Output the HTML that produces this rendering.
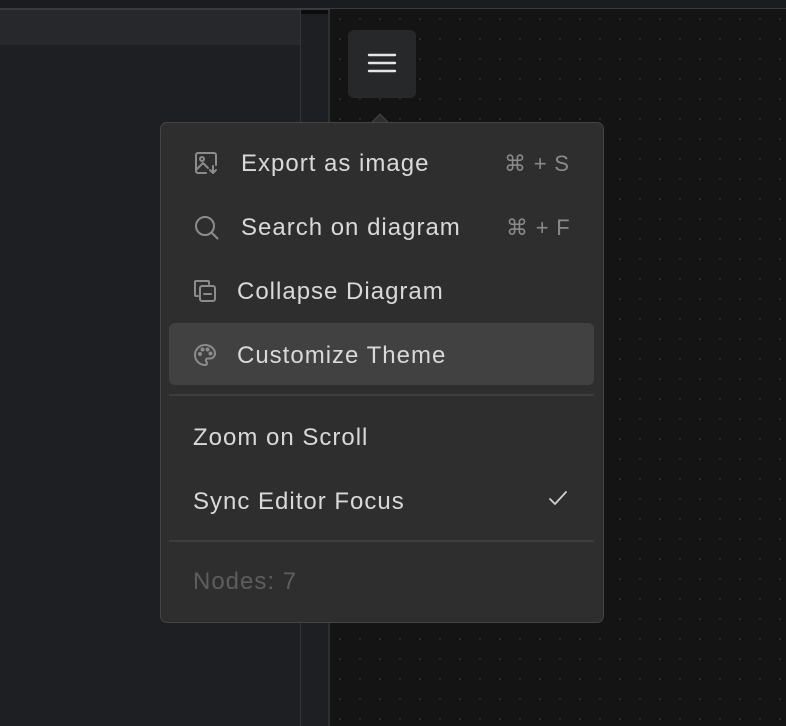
<!DOCTYPE html>
<html><head><meta charset="utf-8"><style>
*{margin:0;padding:0;box-sizing:border-box}
body{width:786px;height:726px;overflow:hidden;background:#141414;position:relative;font-family:"Liberation Sans",sans-serif}
.abs{position:absolute}
.canvas{left:330px;top:9px;right:0;bottom:0;background-color:#141414;background-image:radial-gradient(circle,#2a2a2a 1px,transparent 1.3px);background-size:20px 20px;background-position:0 0}
.menu{left:160px;top:122px;width:444px;height:501px;background:#2e2e2e;border:1px solid #444;border-radius:7px}
.t{position:absolute;color:#d9d9d9;font-size:24px;letter-spacing:1px;line-height:30px}
.k{position:absolute;color:#8a8a8a;font-size:22px;line-height:30px;letter-spacing:0.8px}
.ic{position:absolute}
</style></head><body>
<div class="abs" style="left:0;top:0;width:786px;height:8px;background:#1b1c1f"></div>
<div class="abs" style="left:0;top:8px;width:786px;height:2px;background:#3a3b3e"></div>
<div class="abs" style="left:0;top:10px;width:300px;height:716px;background:#1e1f22"></div>
<div class="abs" style="left:0;top:10px;width:328px;height:35px;background:#27282b"></div>
<div class="abs" style="left:300px;top:10px;width:1px;height:716px;background:#35363a"></div>
<div class="abs" style="left:301px;top:10px;width:28px;height:4px;background:#0c0c0c"></div>
<div class="abs" style="left:301px;top:14px;width:28px;height:712px;background:#1e1f22"></div>
<div class="abs" style="left:328px;top:10px;width:2px;height:716px;background:#2e2f32"></div>
<div class="abs canvas"></div>
<div class="abs" style="left:348px;top:30px;width:68px;height:68px;background:#27282a;border-radius:6px"></div>
<svg class="abs" style="left:366px;top:52px" width="32" height="24"><g stroke="#e6e6e6" stroke-width="2.4" stroke-linecap="round"><line x1="3" y1="3" x2="29" y2="3"/><line x1="3" y1="11" x2="29" y2="11"/><line x1="3" y1="19" x2="29" y2="19"/></g></svg>
<div class="abs" style="left:374px;top:116px;width:12px;height:12px;background:#2e2e2e;border-left:1px solid #444;border-top:1px solid #444;transform:rotate(45deg)"></div>
<div class="abs menu"></div>
<div class="abs" style="left:169px;top:323px;width:425px;height:62px;background:#414141;border-radius:6px"></div>
<div class="abs" style="left:169px;top:394px;width:425px;height:2px;background:#3d3d3d"></div>
<div class="abs" style="left:169px;top:540px;width:425px;height:2px;background:#3d3d3d"></div>

<svg class="ic" style="left:194px;top:151px" width="26" height="26" fill="none" stroke="#8c8c8c" stroke-width="2" stroke-linecap="round" stroke-linejoin="round"><path d="M12 22H4a2 2 0 0 1-2-2V4a2 2 0 0 1 2-2h16a2 2 0 0 1 2 2v10"/><circle cx="8" cy="8" r="2"/><path d="M2 19l7-7 5 5"/><path d="M19 15v7M16 19l3 3 3-3"/></svg>
<div class="t" style="left:241px;top:149px">Export as image</div>
<div class="k" style="left:504px;top:149px">⌘ + S</div>

<svg class="ic" style="left:194px;top:215px" width="26" height="26" fill="none" stroke="#8c8c8c" stroke-width="2" stroke-linecap="round"><circle cx="11" cy="11" r="9"/><path d="M17.5 17.5l6 6"/></svg>
<div class="t" style="left:241px;top:213px">Search on diagram</div>
<div class="k" style="left:506px;top:213px">⌘ + F</div>

<svg class="ic" style="left:193px;top:279px" width="26" height="26" fill="none" stroke="#8c8c8c" stroke-width="2" stroke-linecap="round" stroke-linejoin="round"><path d="M5 17H3a1 1 0 0 1-1-1V3a1 1 0 0 1 1-1h12a1 1 0 0 1 1 1v2"/><rect x="7" y="7" width="15" height="15" rx="2"/><path d="M11 15h7"/></svg>
<div class="t" style="left:237px;top:277px">Collapse Diagram</div>

<svg class="ic" style="left:193px;top:343px" width="26" height="26" fill="none" stroke="#8c8c8c" stroke-width="2" stroke-linecap="round" stroke-linejoin="round"><path d="M12 2a10 10 0 0 0 0 20c1.5 0 2-1 2-2 0-.6-.3-1-.6-1.4-.3-.4-.6-.8-.6-1.4 0-1 .9-1.7 2-1.7H17a5 5 0 0 0 5-5C22 5.9 17.5 2 12 2z"/><circle cx="7" cy="11" r="1"/><circle cx="9.5" cy="6.5" r="1"/><circle cx="14.5" cy="6.5" r="1"/><circle cx="17.5" cy="10.5" r="1"/></svg>
<div class="t" style="left:237px;top:341px">Customize Theme</div>

<div class="t" style="left:193px;top:423px">Zoom on Scroll</div>
<div class="t" style="left:193px;top:487px">Sync Editor Focus</div>
<svg class="ic" style="left:548px;top:489px" width="20" height="20" fill="none" stroke="#d0d0d0" stroke-width="1.8" stroke-linecap="round" stroke-linejoin="round"><path d="M2 10l5 5L18 3"/></svg>
<div class="t" style="left:193px;top:567px;color:#5e5e5e">Nodes: 7</div>
</body></html>
